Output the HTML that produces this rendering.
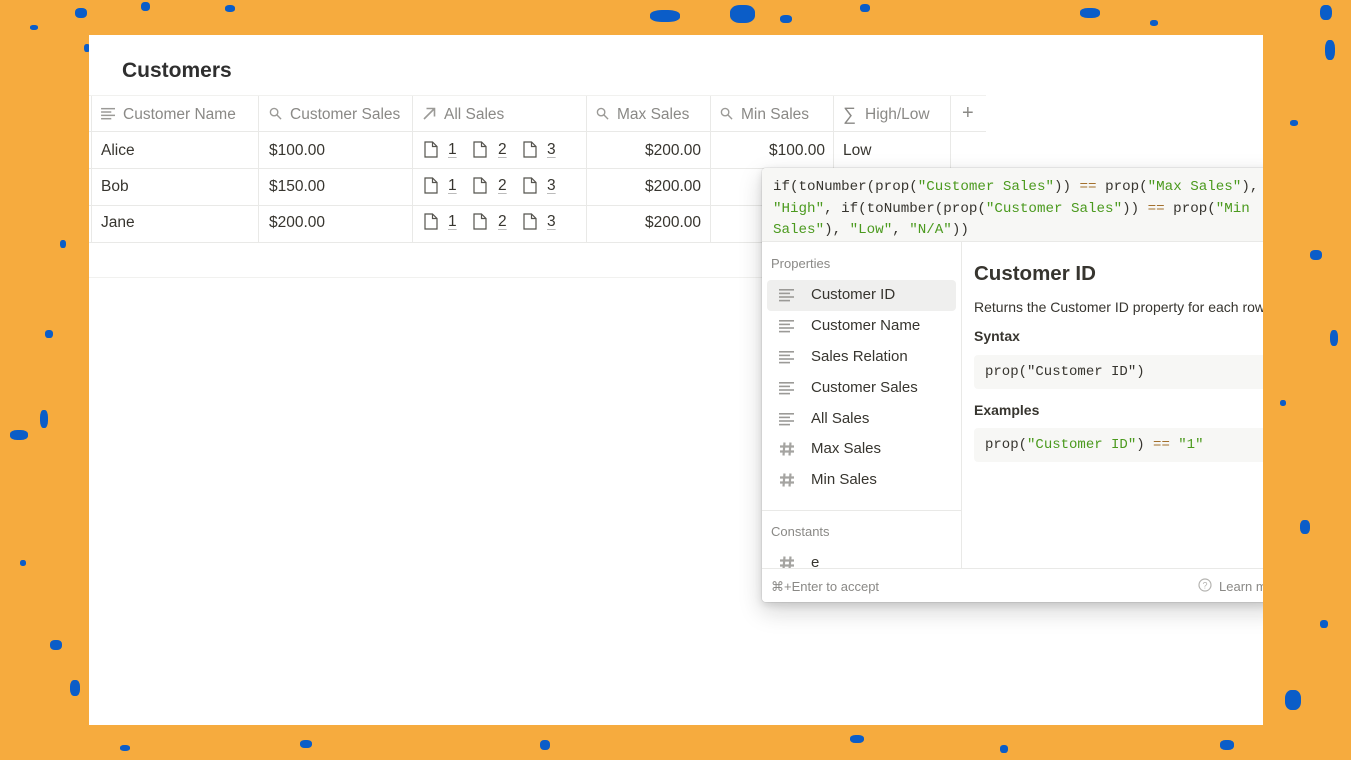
<!DOCTYPE html>
<html><head><meta charset="utf-8">
<style>
*{box-sizing:border-box;margin:0;padding:0}
body{width:1351px;height:760px;background:#f6ab3e;position:relative;overflow:hidden;font-family:"Liberation Sans",sans-serif;color:#37352f}
.d{position:absolute;background:#0b5dc8;border-radius:40%}
#page{position:absolute;left:89px;top:35px;width:1174px;height:690px;background:#fff;overflow:hidden}
h1{position:absolute;left:33px;top:24px;font-size:21px;font-weight:bold;color:#2f2f2f}
.hl{position:absolute;left:0;height:1px;background:#e9e9e7}
.vl{position:absolute;width:1px;background:#e9e9e7}
.c{position:absolute;font-size:15.5px;line-height:20px;white-space:nowrap}
.h{color:#8a8986}
.r{text-align:right}
.mono{font-family:"Liberation Mono",monospace}
.g{color:#4b9a1e}.o{color:#a3702c}
#pop{position:absolute;left:673px;top:133px;width:520px;height:434px;background:#fff;border-radius:4px;box-shadow:0 0 0 1px rgba(15,15,15,.06),0 3px 8px rgba(15,15,15,.12),0 9px 24px rgba(15,15,15,.18);overflow:hidden}
.code{position:absolute;left:0;top:0;width:520px;height:74px;background:#f7f7f5;border-bottom:1px solid #e9e9e7;font-size:14.2px;line-height:21.5px;padding:9px 11px;color:#37352f}
.it{position:absolute;left:49px;font-size:15px;color:#37352f}
svg{position:absolute}
.pg{position:absolute;font-size:15.5px;text-decoration:underline;text-decoration-color:#bbb;text-underline-offset:3px}
</style></head><body>
<svg width="0" height="0" style="position:absolute"><defs>
<symbol id="lines" viewBox="0 0 16 14"><g fill="#9b9a97"><rect x="0" y="1" width="15" height="1.6"/><rect x="0" y="4.6" width="11" height="1.6"/><rect x="0" y="8.2" width="15" height="1.6"/><rect x="0" y="11.8" width="11" height="1.6"/></g></symbol>
<symbol id="hash" viewBox="0 0 16 16"><g stroke="#a5a4a1" stroke-width="2.2" fill="none"><path d="M5.5 1.5L4.5 14.5M11.5 1.5L10.5 14.5M1 5.5H15M1 10.5H15"/></g></symbol>
<symbol id="mag" viewBox="0 0 14 14"><g stroke="#9b9a97" stroke-width="1.5" fill="none"><circle cx="5.5" cy="5.5" r="4"/><path d="M8.5 8.5L13 13"/></g></symbol>
<symbol id="doc" viewBox="0 0 14 17"><path d="M1 1H8.5L13 5.5V16H1Z M8.5 1V5.5H13" fill="none" stroke="#55534e" stroke-width="1.2"/></symbol>
</defs></svg>
<!-- speckles -->
<div class="d" style="left:75px;top:8px;width:12px;height:10px"></div>
<div class="d" style="left:141px;top:2px;width:9px;height:9px"></div>
<div class="d" style="left:30px;top:25px;width:8px;height:5px"></div>
<div class="d" style="left:84px;top:44px;width:6px;height:8px"></div>
<div class="d" style="left:225px;top:5px;width:10px;height:7px"></div>
<div class="d" style="left:650px;top:10px;width:30px;height:12px"></div>
<div class="d" style="left:730px;top:5px;width:25px;height:18px"></div>
<div class="d" style="left:780px;top:15px;width:12px;height:8px"></div>
<div class="d" style="left:860px;top:4px;width:10px;height:8px"></div>
<div class="d" style="left:1080px;top:8px;width:20px;height:10px"></div>
<div class="d" style="left:1150px;top:20px;width:8px;height:6px"></div>
<div class="d" style="left:1320px;top:5px;width:12px;height:15px"></div>
<div class="d" style="left:1325px;top:40px;width:10px;height:20px"></div>
<div class="d" style="left:1290px;top:120px;width:8px;height:6px"></div>
<div class="d" style="left:1310px;top:250px;width:12px;height:10px"></div>
<div class="d" style="left:1330px;top:330px;width:8px;height:16px"></div>
<div class="d" style="left:1280px;top:400px;width:6px;height:6px"></div>
<div class="d" style="left:1300px;top:520px;width:10px;height:14px"></div>
<div class="d" style="left:1285px;top:690px;width:16px;height:20px"></div>
<div class="d" style="left:1320px;top:620px;width:8px;height:8px"></div>
<div class="d" style="left:10px;top:430px;width:18px;height:10px"></div>
<div class="d" style="left:40px;top:410px;width:8px;height:18px"></div>
<div class="d" style="left:50px;top:640px;width:12px;height:10px"></div>
<div class="d" style="left:70px;top:680px;width:10px;height:16px"></div>
<div class="d" style="left:20px;top:560px;width:6px;height:6px"></div>
<div class="d" style="left:45px;top:330px;width:8px;height:8px"></div>
<div class="d" style="left:60px;top:240px;width:6px;height:8px"></div>
<div class="d" style="left:300px;top:740px;width:12px;height:8px"></div>
<div class="d" style="left:540px;top:740px;width:10px;height:10px"></div>
<div class="d" style="left:850px;top:735px;width:14px;height:8px"></div>
<div class="d" style="left:1000px;top:745px;width:8px;height:8px"></div>
<div class="d" style="left:1220px;top:740px;width:14px;height:10px"></div>
<div class="d" style="left:120px;top:745px;width:10px;height:6px"></div>
<div id="page">
<h1>Customers</h1>
<div class="hl" style="top:60px;width:897px;background:#f1f1ef"></div>
<div class="hl" style="top:96px;width:897px"></div>
<div class="hl" style="top:133px;width:897px"></div>
<div class="hl" style="top:170px;width:897px"></div>
<div class="hl" style="top:207px;width:897px"></div>
<div class="hl" style="top:242px;width:897px;background:#f1f1ef"></div>
<div class="vl" style="left:2px;top:61px;height:146px"></div>
<div class="vl" style="left:169px;top:61px;height:146px"></div>
<div class="vl" style="left:323px;top:61px;height:146px"></div>
<div class="vl" style="left:497px;top:61px;height:146px"></div>
<div class="vl" style="left:621px;top:61px;height:146px"></div>
<div class="vl" style="left:744px;top:61px;height:146px"></div>
<div class="vl" style="left:861px;top:61px;height:146px"></div>
<!-- header -->
<svg style="left:12px;top:72px" width="15" height="13"><use href="#lines"/></svg>
<div class="c h" style="left:34px;top:70px">Customer Name</div>
<svg style="left:180px;top:72px" width="13" height="13"><use href="#mag"/></svg>
<div class="c h" style="left:201px;top:70px">Customer Sales</div>
<svg style="left:333px;top:71px" width="14" height="14"><path d="M2 13L12 3M4.5 2.5H12.5V10.5" stroke="#9b9a97" stroke-width="1.6" fill="none"/></svg>
<div class="c h" style="left:355px;top:70px">All Sales</div>
<svg style="left:507px;top:72px" width="13" height="13"><use href="#mag"/></svg>
<div class="c h" style="left:528px;top:70px">Max Sales</div>
<svg style="left:631px;top:72px" width="13" height="13"><use href="#mag"/></svg>
<div class="c h" style="left:652px;top:70px">Min Sales</div>
<div class="c h" style="left:754px;top:69px;font-size:18px">∑</div>
<div class="c h" style="left:776px;top:70px">High/Low</div>
<div class="c h" style="left:873px;top:68px;font-size:20px;font-weight:300">+</div>
<!-- rows -->
<div class="c" style="left:12px;top:106px">Alice</div>
<div class="c" style="left:12px;top:142px">Bob</div>
<div class="c" style="left:12px;top:178px">Jane</div>
<div class="c" style="left:180px;top:106px">$100.00</div>
<div class="c" style="left:180px;top:142px">$150.00</div>
<div class="c" style="left:180px;top:178px">$200.00</div>
<svg style="left:335px;top:106px" width="14" height="17"><use href="#doc"/></svg><div class="pg" style="left:359px;top:106px">1</div>
<svg style="left:384px;top:106px" width="14" height="17"><use href="#doc"/></svg><div class="pg" style="left:409px;top:106px">2</div>
<svg style="left:434px;top:106px" width="14" height="17"><use href="#doc"/></svg><div class="pg" style="left:458px;top:106px">3</div>
<svg style="left:335px;top:142px" width="14" height="17"><use href="#doc"/></svg><div class="pg" style="left:359px;top:142px">1</div>
<svg style="left:384px;top:142px" width="14" height="17"><use href="#doc"/></svg><div class="pg" style="left:409px;top:142px">2</div>
<svg style="left:434px;top:142px" width="14" height="17"><use href="#doc"/></svg><div class="pg" style="left:458px;top:142px">3</div>
<svg style="left:335px;top:178px" width="14" height="17"><use href="#doc"/></svg><div class="pg" style="left:359px;top:178px">1</div>
<svg style="left:384px;top:178px" width="14" height="17"><use href="#doc"/></svg><div class="pg" style="left:409px;top:178px">2</div>
<svg style="left:434px;top:178px" width="14" height="17"><use href="#doc"/></svg><div class="pg" style="left:458px;top:178px">3</div>
<div class="c r" style="left:500px;width:112px;top:106px">$200.00</div>
<div class="c r" style="left:500px;width:112px;top:142px">$200.00</div>
<div class="c r" style="left:500px;width:112px;top:178px">$200.00</div>
<div class="c r" style="left:624px;width:112px;top:106px">$100.00</div>
<div class="c" style="left:754px;top:106px">Low</div>
<!-- popup -->
<div id="pop">
<div class="code mono">if(toNumber(prop(<span class="g">"Customer Sales"</span>)) <span class="o">==</span> prop(<span class="g">"Max Sales"</span>),<br><span class="g">"High"</span>, if(toNumber(prop(<span class="g">"Customer Sales"</span>)) <span class="o">==</span> prop(<span class="g">"Min</span><br><span class="g">Sales"</span>), <span class="g">"Low"</span>, <span class="g">"N/A"</span>))</div>
<div class="vl" style="left:199px;top:74px;height:326px"></div>
<div class="c h" style="left:9px;top:86px;font-size:13px">Properties</div>
<div style="position:absolute;left:5px;top:112px;width:189px;height:31px;background:#efefee;border-radius:4px"></div>
<svg style="left:17px;top:120px" width="16" height="14"><use href="#lines"/></svg><div class="it" style="top:118px">Customer ID</div>
<svg style="left:17px;top:151px" width="16" height="14"><use href="#lines"/></svg><div class="it" style="top:149px">Customer Name</div>
<svg style="left:17px;top:182px" width="16" height="14"><use href="#lines"/></svg><div class="it" style="top:180px">Sales Relation</div>
<svg style="left:17px;top:213px" width="16" height="14"><use href="#lines"/></svg><div class="it" style="top:211px">Customer Sales</div>
<svg style="left:17px;top:244px" width="16" height="14"><use href="#lines"/></svg><div class="it" style="top:242px">All Sales</div>
<svg style="left:17px;top:273px" width="16" height="16"><use href="#hash"/></svg><div class="it" style="top:272px">Max Sales</div>
<svg style="left:17px;top:304px" width="16" height="16"><use href="#hash"/></svg><div class="it" style="top:303px">Min Sales</div>
<div class="hl" style="top:342px;width:199px"></div>
<div class="c h" style="left:9px;top:354px;font-size:13px">Constants</div>
<svg style="left:17px;top:387px" width="16" height="16"><use href="#hash"/></svg><div class="it" style="top:386px">e</div>
<div style="position:absolute;left:0;top:400px;width:520px;height:34px;background:#fff;border-top:1px solid #e9e9e7"></div>
<div class="c h" style="left:9px;top:409px;font-size:13px">⌘+Enter to accept</div>
<svg style="left:436px;top:410px" width="14" height="14"><circle cx="7" cy="7" r="6" stroke="#b5b4b1" stroke-width="1.2" fill="none"/><text x="7" y="10.5" font-size="9" text-anchor="middle" fill="#b5b4b1" font-family="Liberation Sans">?</text></svg>
<div class="c h" style="left:457px;top:409px;font-size:13px">Learn more</div>
<div class="c" style="left:212px;top:94px;font-size:20.5px;font-weight:bold;line-height:24px">Customer ID</div>
<div class="c" style="left:212px;top:129px;font-size:14px">Returns the Customer ID property for each row</div>
<div class="c" style="left:212px;top:158px;font-size:14px;font-weight:bold">Syntax</div>
<div style="position:absolute;left:212px;top:187px;width:320px;height:34px;background:#f7f7f5;border-radius:4px"></div>
<div class="c mono" style="left:223px;top:194px;font-size:14px">prop("Customer ID")</div>
<div class="c" style="left:212px;top:232px;font-size:14px;font-weight:bold">Examples</div>
<div style="position:absolute;left:212px;top:260px;width:320px;height:34px;background:#f7f7f5;border-radius:4px"></div>
<div class="c mono" style="left:223px;top:267px;font-size:14px">prop(<span class="g">"Customer ID"</span>) <span class="o">==</span> <span class="g">"1"</span></div>
</div>
</div>
</body></html>
